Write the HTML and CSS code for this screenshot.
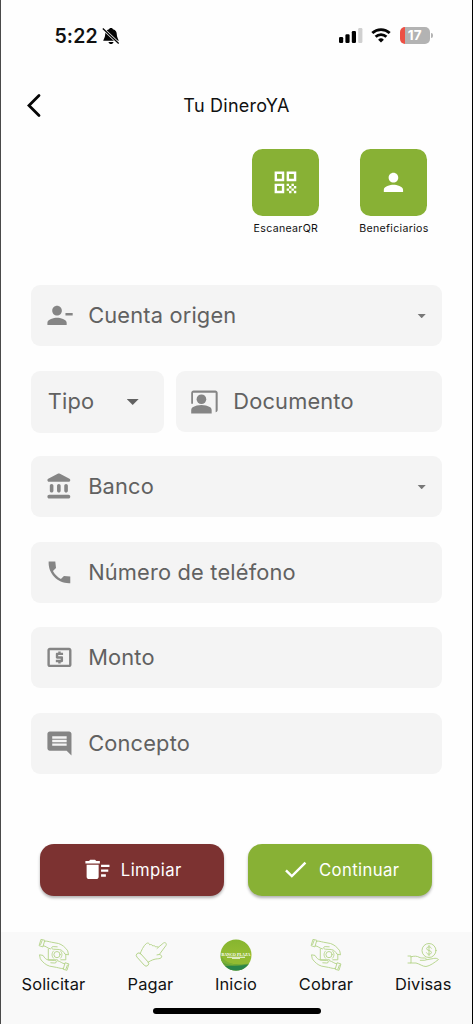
FILE: index.html
```html
<!DOCTYPE html>
<html lang="es">
<head>
<meta charset="utf-8">
<title>Tu DineroYA</title>
<link rel="stylesheet" href="styles.css">
</head>
<body>
<svg class="defs" width="0" height="0" aria-hidden="true">
  <symbol id="palm" viewBox="0 0 32 32" overflow="visible">
    <path d="M1.200 6.300L3 .3l3.800 1L5 7.500zM2.600 5.500l1.500-4M6.700 2.200C9 1.700 11 2.800 13.500 3.200l7 1.300c3.500 1 7 4 9.200 7.300l.8 4-3.500-.6c-1.500-2.500-3-4.200-5.500-4.700l-6-.3c-2.500-.2-2.500-2.500-.3-2.600l4 .2M5.300 6.800C8 7 9.500 9.300 12.500 9.900"/>
  </symbol>
  <symbol id="cash-hands" viewBox="0 0 32 32">
    <use href="#palm" width="32" height="32"/>
    <use href="#palm" width="32" height="32" transform="rotate(180 16 15.800)"/>
    <path d="M10.300 10v10.800h9M27.800 15.500v5.300h-5"/><circle cx="19" cy="15.600" r="3.100"/><path d="M15.500 12c-2 2-2 5.200 0 7.200M22.500 12c2 2 2 5.200 0 7.200"/>
  </symbol>
</svg>
<main class="app">
  <div class="status">
    <span class="clock">5:22</span>
    <svg class="bell" viewBox="0 0 18 18"><path d="M9 1c1.200 0 1.800.6 2 1.300C13.800 3 14.800 5 14.800 7.500c0 2.500 1.500 4.500 2 6.300H1.200c.5-1.800 2-3.800 2-6.300C3.200 5 4.200 3 7 2.300 7.200 1.600 7.800 1 9 1zM6.500 14.900h5C11.200 16.200 10.100 17 9 17s-2.200-.8-2.500-2.100z"/><path class="gap" d="M.8 1.500l15.900 15"/><path class="slash" d="M.8 1.500l15.900 15"/></svg>
    <svg class="signal" viewBox="0 0 24 15"><rect x="0" y="9" width="4.200" height="6" rx="1.200"/><rect x="6.400" y="6.300" width="4.200" height="8.700" rx="1.200"/><rect x="12.800" y="3.100" width="4.200" height="11.900" rx="1.200"/><rect class="weak" x="19.200" y="0" width="4.200" height="15" rx="1.200"/></svg>
    <svg class="wifi" viewBox="0 0 20 15"><path d="M1.300 5.100a12.600 12.600 0 0 1 17.400 0M4.600 8.700a7.800 7.800 0 0 1 10.800 0"/><path class="dot" d="M10 14.600l-2.900-2.900a4.200 4.200 0 0 1 5.800 0z"/></svg>
    <div class="battery"><span>17</span></div>
    <i class="cap"></i>
  </div>

  <header class="bar">
    <svg class="back" viewBox="0 0 14 23"><path d="M12 1.500L2 11.500l10 10"/></svg>
    <h1>Tu DineroYA</h1>
  </header>

  <section class="shortcuts">
    <div class="shortcut">
      <div class="tile"><svg class="icon" viewBox="0 0 24 24"><path d="M3 11h8V3H3v8zm2-6h4v4H5V5zM3 21h8v-8H3v8zm2-6h4v4H5v-4zM13 3v8h8V3h-8zm6 6h-4V5h4v4zM19 19h2v2h-2zM13 13h2v2h-2zM15 15h2v2h-2zM13 17h2v2h-2zM15 19h2v2h-2zM17 17h2v2h-2zM17 13h2v2h-2zM19 15h2v2h-2z"/></svg></div>
      <span>EscanearQR</span>
    </div>
    <div class="shortcut">
      <div class="tile"><svg class="icon" viewBox="0 0 24 24"><path d="M12 12c2.210 0 4-1.790 4-4s-1.790-4-4-4-4 1.790-4 4 1.790 4 4 4zm0 2c-2.670 0-8 1.340-8 4v2h16v-2c0-2.660-5.330-4-8-4z"/></svg></div>
      <span>Beneficiarios</span>
    </div>
  </section>

  <form class="form">
    <div class="field"><svg class="icon" viewBox="0 0 24 24"><path d="M14 8c0-2.210-1.790-4-4-4S6 5.790 6 8s1.790 4 4 4 4-1.790 4-4zm3 2v2h6v-2h-6zM2 18v2h16v-2c0-2.660-5.330-4-8-4s-8 1.340-8 4z"/></svg><span class="label">Cuenta origen</span><i class="caret"></i></div>
    <div class="pair">
      <div class="field type"><span class="label">Tipo</span><i class="caret large"></i></div>
      <div class="field document"><svg class="icon" viewBox="0 0 24 24"><path d="M21 3H3c-1.100 0-2 .9-2 2v9h1.500V4.700h18.800V21c.9 0 1.700-.9 1.700-2V5c0-1.100-.9-2-2-2z"/><circle cx="9.500" cy="10.200" r="4"/><path d="M16.390 16.560C14.710 15.700 12.030 15 9.500 15s-5.210.7-6.890 1.560C1.610 17.070 1 18.100 1 19.220V22h17v-2.780c0-1.120-.61-2.150-1.610-2.660z"/></svg><span class="label">Documento</span></div>
    </div>
    <div class="field"><svg class="icon" viewBox="0 0 24 24"><path d="M4 11.500v4c0 .83.67 1.500 1.500 1.500S7 16.330 7 15.500v-4c0-.83-.67-1.500-1.500-1.500S4 10.670 4 11.500zm6 0v4c0 .83.67 1.500 1.500 1.500s1.500-.67 1.500-1.500v-4c0-.83-.67-1.500-1.500-1.500s-1.500.67-1.500 1.500zM3.500 22h16c.83 0 1.500-.67 1.500-1.500s-.67-1.500-1.500-1.500h-16c-.83 0-1.500.67-1.500 1.500S2.670 22 3.500 22zM16 11.500v4c0 .83.67 1.500 1.500 1.500s1.500-.67 1.500-1.500v-4c0-.83-.67-1.500-1.500-1.500s-1.500.67-1.500 1.500zM10.570 1.490l-7.900 4.160c-.41.21-.67.64-.67 1.100C2 7.440 2.560 8 3.250 8h16.510C20.440 8 21 7.440 21 6.750c0-.46-.26-.89-.67-1.100l-7.900-4.160c-.58-.31-1.280-.31-1.860 0z"/></svg><span class="label">Banco</span><i class="caret"></i></div>
    <div class="field"><svg class="icon" viewBox="0 0 24 24"><path d="M21 15.460l-5.270-.61-2.520 2.520c-2.830-1.440-5.150-3.750-6.590-6.590l2.530-2.530L8.540 3H3.030C2.450 13.180 10.820 21.550 21 20.970v-5.510z"/></svg><span class="label">Número de teléfono</span></div>
    <div class="field"><svg class="icon" viewBox="0 0 24 24"><path d="M11 17h2v-1h1c.55 0 1-.45 1-1v-3c0-.55-.45-1-1-1h-3v-1h4V8h-2V7h-2v1h-1c-.55 0-1 .45-1 1v3c0 .55.45 1 1 1h3v1H9v2h2v1zm9-13H4c-1.110 0-1.990.89-1.990 2L2 18c0 1.110.89 2 2 2h16c1.110 0 2-.89 2-2V6c0-1.110-.89-2-2-2zm0 14H4V6h16v12z"/></svg><span class="label">Monto</span></div>
    <div class="field"><svg class="icon" viewBox="0 0 24 24"><path d="M21.990 4c0-1.100-.89-2-1.990-2H4c-1.100 0-2 .9-2 2v12c0 1.100.9 2 2 2h14l4 4-.01-18zM18 14H6v-2h12v2zm0-3H6V9h12v2zm0-3H6V6h12v2z"/></svg><span class="label">Concepto</span></div>
  </form>

  <div class="actions">
    <div class="button clear"><svg class="icon" viewBox="0 0 24 24"><path d="M15 16h4v2h-4zm0-8h7v2h-7zm0 4h6v2h-6zM3 18c0 1.100.9 2 2 2h6c1.100 0 2-.9 2-2V8H3v10zM14 5h-3l-1-1H6L5 5H2v2h12z"/></svg><span>Limpiar</span></div>
    <div class="button go"><svg class="icon" viewBox="0 0 24 24"><path d="M9 16.170L4.830 12l-1.420 1.410L9 19 21 7l-1.410-1.410z"/></svg><span>Continuar</span></div>
  </div>

  <nav class="tabs">
    <div class="tab solicitar"><svg class="line" viewBox="0 0 32 32"><use href="#cash-hands"/></svg><span>Solicitar</span></div>
    <div class="tab pagar"><svg class="line" viewBox="0 0 32 32"><rect x="-.5" y="18" width="16" height="5" rx="2.500" transform="rotate(48 7.500 20.500)"/><path d="M5.200 14.600c1.300-3 3-7.600 6.300-10.200 1.300-.8 2.800-.2 3.200 1.400 1-.6 2.600-.2 3.100 1.200 1-.6 2.400-.2 2.900 1 .8-.5 2-.4 2.600.3L28.500 4c1.900-1.200 3.700.8 2.400 2.600L24.300 15.500c1.500.3 2.800 1.200 2.300 2.600-.5 1.300-2.200 1.600-4.200 1.700-3 .2-6.400 1.500-9.200 3.400M24.300 15.500l-2.300.4M23.300 8.300l-1.300 1.200"/></svg><span>Pagar</span></div>
    <div class="tab inicio">
      <svg class="logo" viewBox="0 0 32 32"><defs><linearGradient id="leaf" x1="0" y1="0" x2="0" y2="1"><stop offset="0" stop-color="#86b52f"/><stop offset=".4" stop-color="#92bb32"/></linearGradient><clipPath id="disc"><circle cx="16" cy="16" r="15.500"/></clipPath></defs><g clip-path="url(#disc)"><path fill="url(#leaf)" d="M0 0h32v32H0z"/><path fill="#62a038" d="M0 19c6 4 11 9 32 5v9H0z"/><path fill="#7bb034" d="M0 16c5 7 13 11 25 10C14 28 5 25 0 22z"/><path fill="#2a854a" d="M0 27c9 0 20 0 32-2v8H0z"/></g><path fill="#f6faef" d="M7 17.800h18v1H7zM12 19h8v.8h-8z"/><text x="16" y="17" text-anchor="middle" textLength="29" lengthAdjust="spacingAndGlyphs">BANCO PLAZA</text></svg>
      <span>Inicio</span></div>
    <div class="tab cobrar"><svg class="line" viewBox="0 0 32 32"><use href="#cash-hands"/></svg><span>Cobrar</span></div>
    <div class="tab divisas"><svg class="line" viewBox="0 0 32 32"><circle cx="22" cy="11.500" r="7"/><path d="M24.300 9.200c-.4-1-1.200-1.300-2.300-1.300-1.400 0-2.300.7-2.300 1.800 0 2.400 4.700 1.200 4.700 3.700 0 1.100-1 1.800-2.400 1.800-1.200 0-2.100-.5-2.500-1.400M22 6.300v10.500M1 17h3v7H1M4 17.800c3.500-1 6-.8 8 .4 1.500.8 3 .8 5.500.8 2.300 0 2.500 2.200.3 2.300h-4.500M19.500 20.800l7-1.300c2-.4 3.700-.3 5 1-4 3-8.500 6.500-12.500 7-3.500 0-6-2.500-10-3.500H4"/></svg><span>Divisas</span></div>
  </nav>
  <div class="home"></div>
</main>
</body>
</html>
```
FILE: styles.css
```css
* { box-sizing: border-box; }
body { margin: 0; background: #fefefe; font-family: Inter, "Liberation Sans", sans-serif; }
svg { display: block; flex: none; overflow: visible; }
.defs { position: absolute; }
.app { width: 473px; height: 1024px; overflow: hidden; display: flex; flex-direction: column; border-left: 1px solid #4a4a4a; border-right: 1px solid #000; background: #fefefe; color: #111; }

.status { height: 70px; flex: none; display: flex; align-items: center; padding: 1px 39px 0 53.500px; }
.clock { font-size: 19.500px; font-weight: 600; width: 47.500px; letter-spacing: .1px; white-space: nowrap; }
.bell { width: 18px; height: 18px; fill: #050505; }
.bell path.gap { stroke: #fefefe; stroke-width: 2.800; }
.bell path.slash { stroke: #050505; stroke-width: 1.300; }
.signal { width: 24px; height: 15px; margin-left: 219px; }
.weak { fill: #d0d0d0; }
.wifi { width: 20px; height: 15px; margin-left: 8.500px; fill: none; stroke: #050505; stroke-width: 2.800; }
.wifi .dot { fill: #050505; stroke: none; }
.battery { width: 30px; height: 16.500px; margin-left: 9px; flex: none; border-radius: 5px; background: linear-gradient(90deg, #ed5044 5.300px, #b3b3b3 5.300px); color: #fff; font-size: 13.500px; font-weight: 700; line-height: 16.500px; text-align: center; padding-right: 1px; }
.cap { width: 1.800px; height: 5px; margin-left: 1px; flex: none; border-radius: 0 2px 2px 0; background: #b3b3b3; }

.bar { height: 70px; flex: none; display: grid; grid-template-columns: 100px 1fr 100px; align-items: center; }
.back { width: 14px; height: 23px; margin-left: 26px; fill: none; stroke: #050505; stroke-width: 2.800; stroke-linecap: round; }
h1 { margin: 0; text-align: center; font-size: 18px; font-weight: 400; letter-spacing: .25px; }

.shortcuts { height: 145.400px; flex: none; display: flex; justify-content: flex-end; gap: 41px; padding: 9px 44.600px 0 0; }
.shortcut { width: 67px; display: flex; flex-direction: column; align-items: center; gap: 6px; font-size: 10.600px; line-height: 14px; letter-spacing: .32px; white-space: nowrap; }
.tile { width: 67px; height: 66.700px; display: grid; place-items: center; border-radius: 10.500px; background: #88b135; }
.tile .icon { fill: #fff; }
.icon { width: 28.900px; height: 28.900px; }

.form { flex: none; display: flex; flex-direction: column; gap: 24.500px; margin: 0 30.300px 0 29.500px; }
.field { height: 61px; display: flex; align-items: center; padding: 0 15.500px 0 14.600px; border-radius: 9px; background: #f4f4f4; fill: #858585; color: #616161; }
.pair { display: flex; gap: 12.200px; height: 61px; align-items: flex-start; }
.label { font-size: 21.800px; line-height: 28px; letter-spacing: .18px; margin: 0 0 1px 14.200px; white-space: nowrap; flex: 1; }
.type { width: 133.200px; height: 62px; padding: 0 25px 0 17.300px; }
.type .label { margin: 0 0 1px; }
.document { flex: 1; padding-left: 14px; }
.document .label { margin-left: 14.500px; }
.caret { width: 9px; height: 4.700px; background: #777; clip-path: polygon(0 0, 100% 0, 50% 100%); }
.large { width: 12px; height: 6px; background: #616161; }

.actions { flex: none; display: flex; gap: 24px; margin: 69.800px 0 0 39.300px; }
.button { width: 184px; height: 52.500px; display: flex; align-items: center; justify-content: center; gap: 9px; border-radius: 14px; color: #fff; fill: #fff; font-size: 16.700px; letter-spacing: .4px; box-shadow: 0 2px 3px rgba(0,0,0,.3); }
.clear { background: #7c3231; }
.go { background: #88b135; }

.tabs { height: 92px; flex: none; display: flex; margin-top: auto; padding-top: 6.500px; background: #f9f9f9; }
.tab { width: 96.500px; display: flex; flex-direction: column; align-items: center; gap: 3px; font-size: 16.400px; line-height: 20px; letter-spacing: .15px; white-space: nowrap; }
.solicitar { width: 105px; }
.pagar { width: 89px; }
.inicio { width: 82px; }
.cobrar { width: 98px; }
.line { width: 32px; height: 32px; fill: none; stroke: #b2d286; stroke-width: .9; stroke-linejoin: round; stroke-linecap: round; }
.logo { width: 32px; height: 32px; }
.logo text { font: 700 5px "Liberation Serif", serif; fill: #fff; letter-spacing: 0; }
.home { width: 168px; height: 6px; flex: none; align-self: center; margin-top: -16px; margin-bottom: 10px; border-radius: 3px; background: #000; }
```
